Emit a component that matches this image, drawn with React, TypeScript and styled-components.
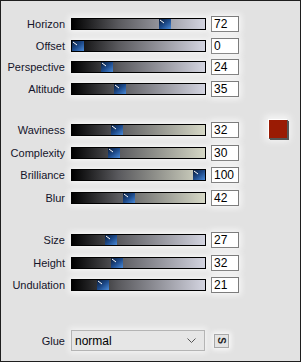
import styled, { createGlobalStyle } from "styled-components";

const Global = createGlobalStyle`
  html, body { margin: 0; padding: 0; background: #e2e2e2; }
  body { font-family: "Liberation Sans", Arial, sans-serif; }
`;

const Panel = styled.div`
  box-sizing: border-box;
  width: 301px;
  height: 362px;
  border: 1px solid #1e1e1e;
  background: #e2e2e2;
  padding: 12px 0 0 0;
  position: relative;
`;

const Group = styled.div<{ $gap: number }>`
  display: flex;
  flex-direction: column;
  margin-bottom: ${(p) => p.$gap}px;
`;

const Row = styled.div<{ $h: number }>`
  display: flex;
  align-items: center;
  height: ${(p) => p.$h}px;
`;

const Label = styled.div`
  width: 64px;
  text-align: right;
  font-size: 11px;
  color: #14142a;
  padding-right: 6px;
  box-sizing: border-box;
  width: 70px;
`;

const Track = styled.div<{ $end: string }>`
  position: relative;
  box-sizing: border-box;
  width: 135px;
  height: 12px;
  border: 1px solid #000;
  background: linear-gradient(to right, #000 0%, #5a5a5e 35%, ${(p) => p.$end} 100%);
  box-shadow: 0 0 6px 2px rgba(255, 255, 255, 0.75);
`;

const Thumb = styled.svg`
  position: absolute;
  top: 0;
  display: block;
`;

const NumBox = styled.div`
  box-sizing: border-box;
  width: 28px;
  height: 16px;
  margin-left: 5px;
  border: 1px solid #7c7c7c;
  background: #fff;
  font-size: 12px;
  line-height: 14px;
  padding-left: 2px;
  color: #000;
  box-shadow: 0 0 6px 2px rgba(255, 255, 255, 0.75);
`;

const Swatch = styled.div`
  position: absolute;
  left: 267px;
  top: 118px;
  width: 18px;
  height: 18px;
  background: #9a1b04;
  border-top: 1px solid #fff;
  border-left: 1px solid #fff;
  box-shadow: 1px 1px 0 #555, 2px 2px 0 #555, 0 0 7px 3px rgba(255, 255, 255, 0.7);
`;

const GlueRow = styled.div`
  display: flex;
  align-items: center;
  height: 22px;
`;

const Select = styled.div`
  box-sizing: border-box;
  width: 134px;
  height: 21px;
  border: 1px solid #b4b4b4;
  background: #e6e6e6;
  display: flex;
  align-items: center;
  justify-content: space-between;
  padding: 0 8px 0 3px;
  font-size: 12px;
  color: #000;
  box-shadow: 0 0 6px 2px rgba(255, 255, 255, 0.6);
`;

const SButton = styled.div`
  box-sizing: border-box;
  width: 15px;
  height: 14px;
  margin-left: 9px;
  border: 1px solid #a8a8a8;
  background: #e4e4e4;
  display: flex;
  align-items: center;
  justify-content: center;
  font-size: 10px;
  font-weight: bold;
  color: #222;
  box-shadow: 0 0 5px 2px rgba(255, 255, 255, 0.8);
  span { display: inline-block; transform: rotate(90deg); }
`;

type Item = { label: string; value: number };

const groups: { items: Item[]; end: string; h: number; gap: number }[] = [
  {
    items: [
      { label: "Horizon", value: 72 },
      { label: "Offset", value: 0 },
      { label: "Perspective", value: 24 },
      { label: "Altitude", value: 35 },
    ],
    end: "#d3d4e0",
    h: 21.7,
    gap: 19,
  },
  {
    items: [
      { label: "Waviness", value: 32 },
      { label: "Complexity", value: 30 },
      { label: "Brilliance", value: 100 },
      { label: "Blur", value: 42 },
    ],
    end: "#d6d8c6",
    h: 22.7,
    gap: 19,
  },
  {
    items: [
      { label: "Size", value: 27 },
      { label: "Height", value: 32 },
      { label: "Undulation", value: 21 },
    ],
    end: "#d3d4e0",
    h: 22.7,
    gap: 33,
  },
];

const SliderThumb = ({ value }: { value: number }) => (
  <Thumb width="12" height="10" viewBox="0 0 12 10" style={{ left: (value / 100) * 121 }}>
    <defs>
      <linearGradient id="tg" x1="0" y1="0" x2="1" y2="1">
        <stop offset="0" stopColor="#0b1d3a" />
        <stop offset="0.5" stopColor="#1d4a8a" />
        <stop offset="1" stopColor="#4a8ad8" />
      </linearGradient>
    </defs>
    <rect width="12" height="10" fill="url(#tg)" />
    <line x1="1" y1="1" x2="5" y2="4" stroke="#fff" strokeWidth="1" />
  </Thumb>
);

export default function App() {
  return (
    <>
      <Global />
      <Panel>
        {groups.map((g) => (
          <Group key={g.items[0].label} $gap={g.gap}>
            {g.items.map((it) => (
              <Row key={it.label} $h={g.h}>
                <Label>{it.label}</Label>
                <Track $end={g.end}>
                  <SliderThumb value={it.value} />
                </Track>
                <NumBox>{it.value}</NumBox>
              </Row>
            ))}
          </Group>
        ))}
        <GlueRow>
          <Label>Glue</Label>
          <Select>
            normal
            <svg width="9" height="5" viewBox="0 0 9 5">
              <polyline points="0.5,0.5 4.5,4.5 8.5,0.5" fill="none" stroke="#555" strokeWidth="1" />
            </svg>
          </Select>
          <SButton>
            <span>S</span>
          </SButton>
        </GlueRow>
        <Swatch />
      </Panel>
    </>
  );
}
